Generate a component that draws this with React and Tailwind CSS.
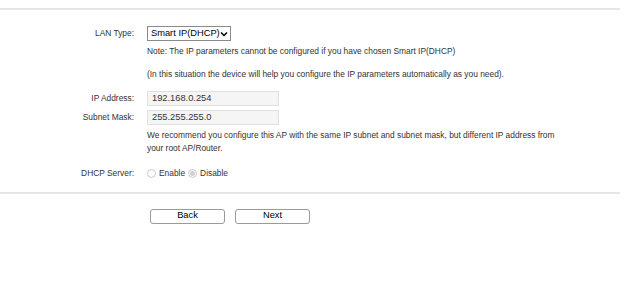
import { useState } from "react";

function Row({ label, children, className = "" }) {
  return (
    <div className={`flex ${className}`}>
      <div className="w-[134px] shrink-0 text-right text-[#333]">{label}</div>
      <div className="ml-[13px] flex-1">{children}</div>
    </div>
  );
}

function Radio({ checked, label, onClick }) {
  return (
    <label className="flex items-center gap-[3px] cursor-pointer" onClick={onClick}>
      <span className="w-[9px] h-[9px] rounded-full border border-[#c8c8c8] bg-white flex items-center justify-center">
        {checked && <span className="w-[5px] h-[5px] rounded-full bg-[#d0d0d0]" />}
      </span>
      <span>{label}</span>
    </label>
  );
}

export default function App() {
  const [dhcp, setDhcp] = useState(false);

  return (
    <div
      className="w-[624px] h-[294px] bg-white text-[8.4px] text-[#333] overflow-hidden"
      style={{ fontFamily: '"Liberation Sans Narrow", "Arial Narrow", "Liberation Sans", sans-serif' }}
    >
      <div className="h-[8px]" />
      <div className="w-[620px] h-[2px] bg-[#e6e6e6]" />

      <Row label="LAN Type:" className="mt-[16px] items-center">
        <div className="inline-flex items-center w-[84px] h-[15px] border border-[#8a8a8a] bg-white pl-[3px] pr-[2px] text-[9.3px] text-black whitespace-nowrap">
          <span className="flex-1">Smart IP(DHCP)</span>
          <svg width="8" height="6" viewBox="0 0 8 6" className="shrink-0">
            <path d="M1 1.5 L4 4.5 L7 1.5" fill="none" stroke="#000" strokeWidth="1.5" />
          </svg>
        </div>
      </Row>

      <Row label="" className="mt-[5px]">
        <div className="leading-[11px]">Note: The IP parameters cannot be configured if you have chosen Smart IP(DHCP)</div>
        <div className="leading-[11px] mt-[12px]">
          (In this situation the device will help you configure the IP parameters automatically as you need).
        </div>
      </Row>

      <Row label="IP Address:" className="mt-[11px] items-center">
        <div className="w-[132px] h-[15px] border border-[#e0e0e0] bg-[#f5f5f5] px-[4px] flex items-center text-[9.3px]">
          192.168.0.254
        </div>
      </Row>

      <Row label="Subnet Mask:" className="mt-[4px] items-center">
        <div className="w-[132px] h-[15px] border border-[#e0e0e0] bg-[#f5f5f5] px-[4px] flex items-center text-[9.3px]">
          255.255.255.0
        </div>
      </Row>

      <Row label="" className="mt-[4px]">
        <div className="leading-[13px] w-[416px]">
          We recommend you configure this AP with the same IP subnet and subnet mask, but different IP address from your
          root AP/Router.
        </div>
      </Row>

      <Row label="DHCP Server:" className="mt-[12px] items-center">
        <div className="flex items-center gap-[3px]">
          <Radio checked={dhcp} label="Enable" onClick={() => setDhcp(true)} />
          <Radio checked={!dhcp} label="Disable" onClick={() => setDhcp(false)} />
        </div>
      </Row>

      <div className="mt-[12px] w-[620px] h-[2px] bg-[#e6e6e6]" />

      <div className="flex gap-[10px] pl-[150px] mt-[15px]">
        <button className="w-[75px] h-[15px] rounded-[3px] border border-[#9a9a9a] bg-white text-[9.3px] text-black leading-none">
          Back
        </button>
        <button className="w-[75px] h-[15px] rounded-[3px] border border-[#9a9a9a] bg-white text-[9.3px] text-black leading-none">
          Next
        </button>
      </div>
    </div>
  );
}
